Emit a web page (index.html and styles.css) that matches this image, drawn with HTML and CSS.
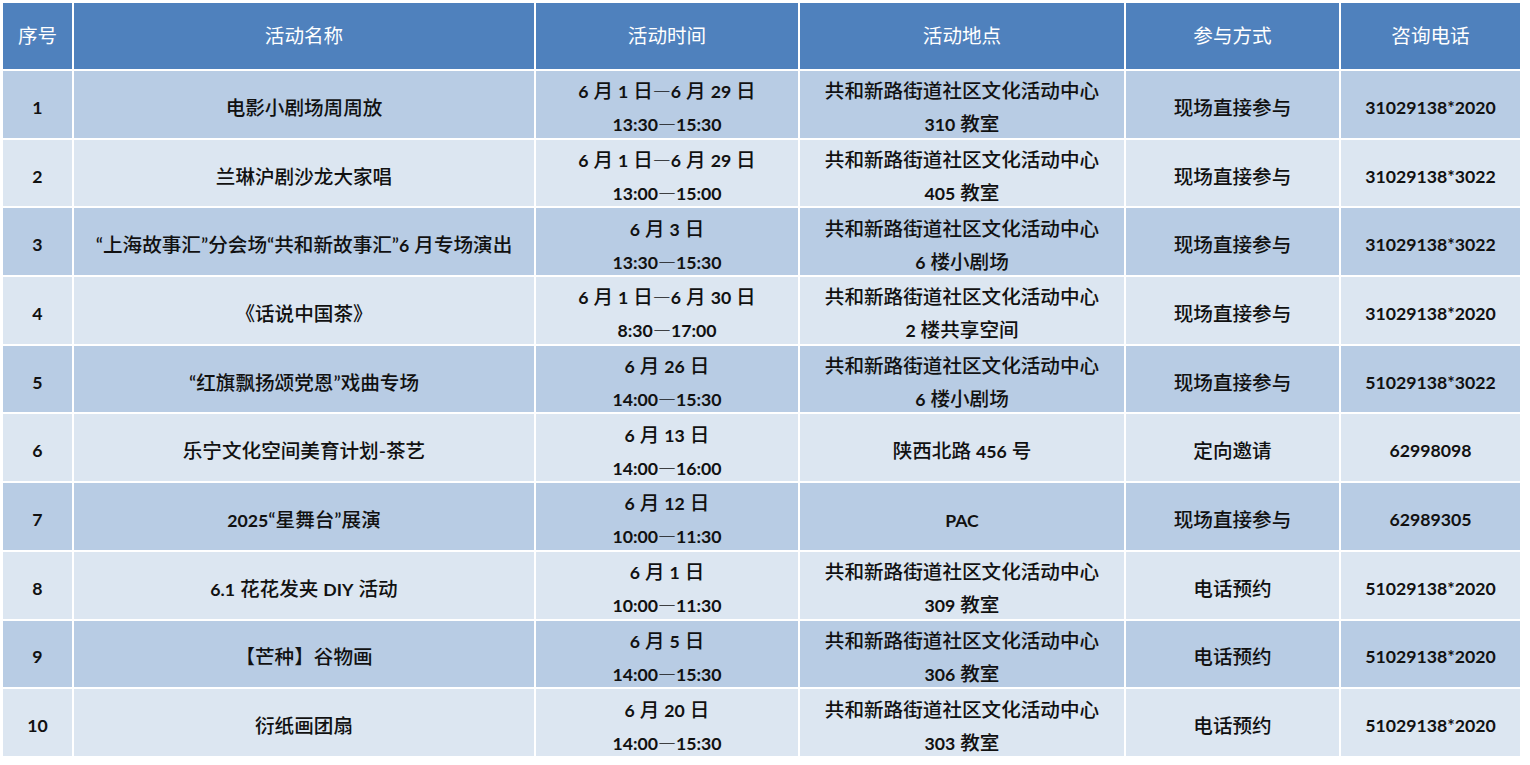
FILE: index.html
```html
<!DOCTYPE html>
<html lang="zh-CN">
<head>
<meta charset="utf-8">
<title>活动安排</title>
<link rel="stylesheet" href="styles.css">
</head>
<body>
<table class="schedule">
  <colgroup>
    <col class="c-no"><col class="c-name"><col class="c-time"><col class="c-place"><col class="c-way"><col class="c-tel">
  </colgroup>
  <thead>
    <tr class="head">
      <th>序号</th><th>活动名称</th><th>活动时间</th><th>活动地点</th><th>参与方式</th><th>咨询电话</th>
    </tr>
  </thead>
  <tbody>
    <tr class="odd">
      <td class="num"><div class="in">1</div></td>
      <td><div class="in">电影小剧场周周放</div></td>
      <td><div class="in"><b>6</b> 月 <b>1</b> 日<span class="dash">—</span><b>6</b> 月 <b>29</b> 日<br><b>13:30<span class="dash">—</span>15:30</b></div></td>
      <td><div class="in">共和新路街道社区文化活动中心<br><b>310</b> 教室</div></td>
      <td><div class="in">现场直接参与</div></td>
      <td class="num"><div class="in">31029138*2020</div></td>
    </tr>
    <tr class="even">
      <td class="num"><div class="in">2</div></td>
      <td><div class="in">兰琳沪剧沙龙大家唱</div></td>
      <td><div class="in"><b>6</b> 月 <b>1</b> 日<span class="dash">—</span><b>6</b> 月 <b>29</b> 日<br><b>13:00<span class="dash">—</span>15:00</b></div></td>
      <td><div class="in">共和新路街道社区文化活动中心<br><b>405</b> 教室</div></td>
      <td><div class="in">现场直接参与</div></td>
      <td class="num"><div class="in">31029138*3022</div></td>
    </tr>
    <tr class="odd">
      <td class="num"><div class="in">3</div></td>
      <td><div class="in">“上海故事汇”分会场“共和新故事汇”<b>6</b> 月专场演出</div></td>
      <td><div class="in"><b>6</b> 月 <b>3</b> 日<br><b>13:30<span class="dash">—</span>15:30</b></div></td>
      <td><div class="in">共和新路街道社区文化活动中心<br><b>6</b> 楼小剧场</div></td>
      <td><div class="in">现场直接参与</div></td>
      <td class="num"><div class="in">31029138*3022</div></td>
    </tr>
    <tr class="even">
      <td class="num"><div class="in">4</div></td>
      <td><div class="in">《话说中国茶》</div></td>
      <td><div class="in"><b>6</b> 月 <b>1</b> 日<span class="dash">—</span><b>6</b> 月 <b>30</b> 日<br><b>8:30<span class="dash">—</span>17:00</b></div></td>
      <td><div class="in">共和新路街道社区文化活动中心<br><b>2</b> 楼共享空间</div></td>
      <td><div class="in">现场直接参与</div></td>
      <td class="num"><div class="in">31029138*2020</div></td>
    </tr>
    <tr class="odd">
      <td class="num"><div class="in">5</div></td>
      <td><div class="in">“红旗飘扬颂党恩”戏曲专场</div></td>
      <td><div class="in"><b>6</b> 月 <b>26</b> 日<br><b>14:00<span class="dash">—</span>15:30</b></div></td>
      <td><div class="in">共和新路街道社区文化活动中心<br><b>6</b> 楼小剧场</div></td>
      <td><div class="in">现场直接参与</div></td>
      <td class="num"><div class="in">51029138*3022</div></td>
    </tr>
    <tr class="even">
      <td class="num"><div class="in">6</div></td>
      <td><div class="in">乐宁文化空间美育计划-茶艺</div></td>
      <td><div class="in"><b>6</b> 月 <b>13</b> 日<br><b>14:00<span class="dash">—</span>16:00</b></div></td>
      <td><div class="in">陕西北路 <b>456</b> 号</div></td>
      <td><div class="in">定向邀请</div></td>
      <td class="num"><div class="in">62998098</div></td>
    </tr>
    <tr class="odd">
      <td class="num"><div class="in">7</div></td>
      <td><div class="in"><b>2025</b>“星舞台”展演</div></td>
      <td><div class="in"><b>6</b> 月 <b>12</b> 日<br><b>10:00<span class="dash">—</span>11:30</b></div></td>
      <td><div class="in"><b>PAC</b></div></td>
      <td><div class="in">现场直接参与</div></td>
      <td class="num"><div class="in">62989305</div></td>
    </tr>
    <tr class="even">
      <td class="num"><div class="in">8</div></td>
      <td><div class="in"><b>6.1</b> 花花发夹 <b>DIY</b> 活动</div></td>
      <td><div class="in"><b>6</b> 月 <b>1</b> 日<br><b>10:00<span class="dash">—</span>11:30</b></div></td>
      <td><div class="in">共和新路街道社区文化活动中心<br><b>309</b> 教室</div></td>
      <td><div class="in">电话预约</div></td>
      <td class="num"><div class="in">51029138*2020</div></td>
    </tr>
    <tr class="odd">
      <td class="num"><div class="in">9</div></td>
      <td><div class="in">【芒种】谷物画</div></td>
      <td><div class="in"><b>6</b> 月 <b>5</b> 日<br><b>14:00<span class="dash">—</span>15:30</b></div></td>
      <td><div class="in">共和新路街道社区文化活动中心<br><b>306</b> 教室</div></td>
      <td><div class="in">电话预约</div></td>
      <td class="num"><div class="in">51029138*2020</div></td>
    </tr>
    <tr class="even">
      <td class="num"><div class="in">10</div></td>
      <td><div class="in">衍纸画团扇</div></td>
      <td><div class="in"><b>6</b> 月 <b>20</b> 日<br><b>14:00<span class="dash">—</span>15:30</b></div></td>
      <td><div class="in">共和新路街道社区文化活动中心<br><b>303</b> 教室</div></td>
      <td><div class="in">电话预约</div></td>
      <td class="num"><div class="in">51029138*2020</div></td>
    </tr>
  </tbody>
</table>
</body>
</html>
```

FILE: styles.css
```css
html, body {
  margin: 0;
  padding: 0;
  background: #ffffff;
}

.schedule {
  margin: 1px;
  border-collapse: separate;
  border-spacing: 2px;
  table-layout: fixed;
  width: 1521px;
  font-family: "Lato", "Noto Sans CJK SC", "Noto Sans", sans-serif;
  font-size: 19.6px;
  font-weight: 500;
  color: #111111;
}

.c-no { width: 69px; }
.c-name { width: 460px; }
.c-time { width: 262px; }
.c-place { width: 324px; }
.c-way { width: 213px; }
.c-tel { width: 179px; }

.schedule th,
.schedule td {
  padding: 0;
  text-align: center;
  vertical-align: middle;
  white-space: nowrap;
  overflow: hidden;
}

.head th {
  height: 66px;
  background: #4f81bd;
  color: #ffffff;
  font-weight: 400;
  line-height: 26px;
}

tbody td {
  height: 66.7px;
  line-height: 33px;
  box-sizing: border-box;
}

tbody td .in {
  margin-top: 3px;
  margin-bottom: -3px;
}

.odd td { background: #b8cce4; }
.even td { background: #dce6f1; }

.schedule b,
.schedule td.num {
  font-family: "Lato", "Noto Sans", sans-serif;
  font-weight: 700;
  font-size: 17.7px;
}

.schedule b {
  line-height: 20px;
}

.schedule .dash {
  font-family: "Noto Sans CJK SC", sans-serif;
  font-weight: 500;
  font-size: 18px;
  line-height: 20px;
}
```
